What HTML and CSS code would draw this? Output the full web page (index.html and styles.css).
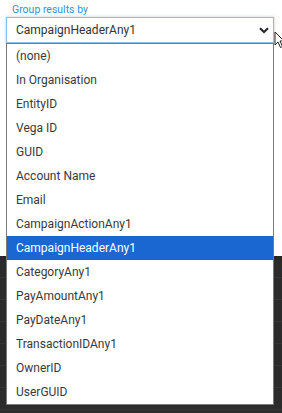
FILE: index.html
```html
<!DOCTYPE html>
<html>
<head>
<meta charset="utf-8">
<link rel="stylesheet" href="styles.css">
</head>
<body>
<div class="panel">
  <div class="label">Group results by</div>
  <div class="select">
    <span class="value">CampaignHeaderAny1</span>
    <svg class="chev" width="10" height="7" viewBox="0 0 10 7"><path d="M1 1.2 L5 5 L9 1.2" fill="none" stroke="#2b2b2b" stroke-width="2.2"/></svg>
  </div>
</div>
<div class="rows">
  <div class="row"></div><div class="row"></div><div class="row"></div><div class="row"></div><div class="row"></div><div class="row"></div><div class="row"></div>
</div>
<ul class="menu">
  <li>(none)</li>
  <li>In Organisation</li>
  <li>EntityID</li>
  <li>Vega ID</li>
  <li>GUID</li>
  <li>Account Name</li>
  <li>Email</li>
  <li>CampaignActionAny1</li>
  <li class="sel">CampaignHeaderAny1</li>
  <li>CategoryAny1</li>
  <li>PayAmountAny1</li>
  <li>PayDateAny1</li>
  <li>TransactionIDAny1</li>
  <li>OwnerID</li>
  <li>UserGUID</li>
</ul>
<svg class="cursor" width="12" height="18" viewBox="0 0 12 18"><path d="M1 1 L1 14 L4 11 L6.5 16.5 L8.5 15.5 L6 10 L10 10 Z" fill="#fff" stroke="#222" stroke-width="1"/></svg>
</body>
</html>
```
FILE: styles.css
```css
html, body {
  margin: 0;
  padding: 0;
}
body {
  width: 282px;
  height: 413px;
  overflow: hidden;
  background: #2c2c2c;
  font-family: Roboto, "Liberation Sans", sans-serif;
  position: relative;
}
.panel {
  background: #fff;
  height: 256px;
  box-sizing: border-box;
  padding: 3px 0 0 6px;
  box-shadow: 0 1px 6px rgba(0,0,0,0.3);
  position: relative;
  z-index: 1;
}
.label {
  font-size: 10.5px;
  color: #3a8fd6;
  line-height: 14px;
  padding-left: 6px;
}
.select {
  width: 268px;
  height: 26px;
  box-sizing: border-box;
  border: 1px solid #8cc0ea;
  box-shadow: 0 0 3px rgba(100,160,220,0.5);
  display: flex;
  align-items: center;
  justify-content: space-between;
  padding: 0 4px 0 9px;
  font-size: 12px;
  color: #333;
}
.chev { margin-top: 1px; }
.rows {
  display: flex;
  flex-direction: column;
}
.row {
  height: 21px;
  border-bottom: 1px solid #363636;
}
.menu {
  position: absolute;
  left: 6px;
  top: 43px;
  width: 268px;
  box-sizing: border-box;
  margin: 0;
  padding: 0;
  list-style: none;
  background: #fff;
  border: 1px solid #7a7a7a;
  z-index: 2;
}
.menu li {
  height: 24px;
  line-height: 24px;
  padding-left: 9px;
  font-size: 12px;
  color: #3a3a3a;
}
.menu li.sel {
  background: #1a67d2;
  color: #fff;
}
.cursor {
  position: absolute;
  left: 274px;
  top: 31px;
  z-index: 3;
}
```
